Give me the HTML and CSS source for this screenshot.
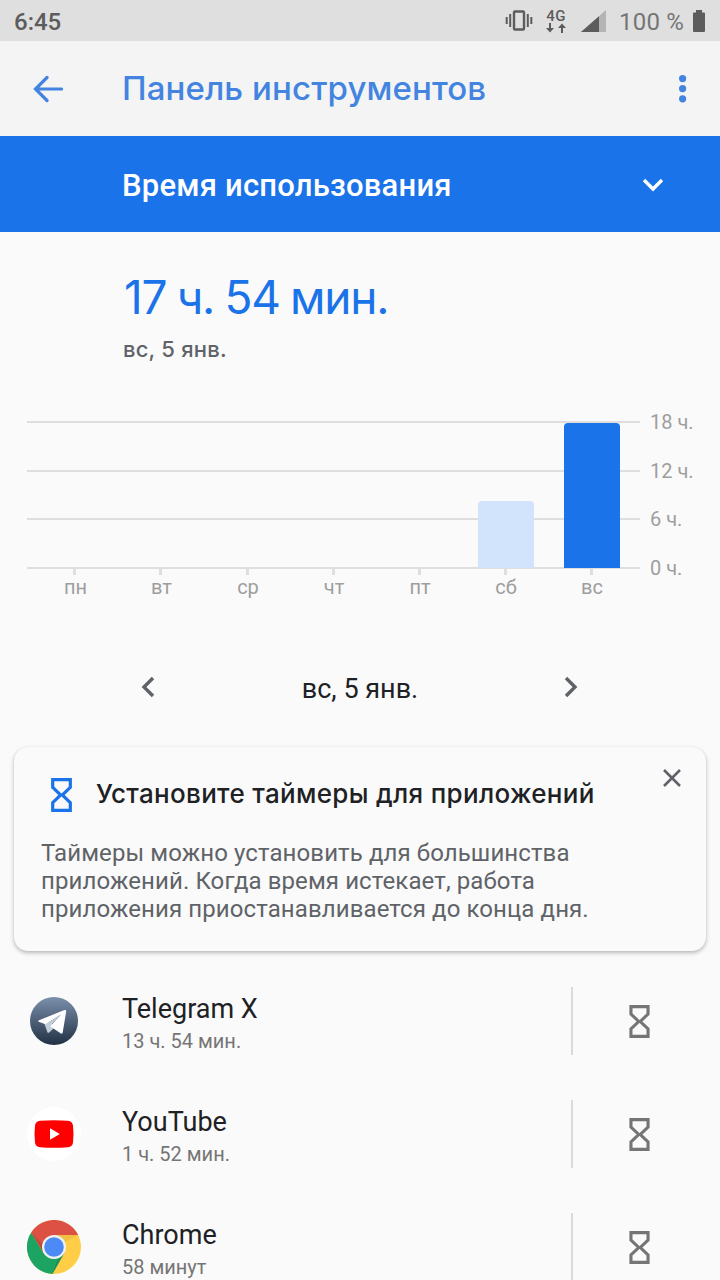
FILE: index.html
```html
<!DOCTYPE html>
<html lang="ru">
<head>
    <meta charset="UTF-8">
    <meta name="viewport" content="width=device-width, initial-scale=1.0">
    <title>Панель инструментов</title>
    <link rel="stylesheet" href="styles.css">
</head>
<body>
    <svg class="symbols" width="0" height="0">
        <symbol id="hourglass" viewBox="0 0 21 34">
            <path d="M1.700 1.700H19.300V9.300L11.300 17L19.300 24.700V32.300H1.700V24.700L9.700 17L1.700 9.300Z" fill="none" stroke="currentColor" stroke-width="3.2"/>
        </symbol>
    </svg>

    <div class="status-bar">
        <span class="clock">6:45</span>
        <div class="status-icons">
            <svg class="vibrate" width="28" height="22" viewBox="0 0 28 22">
                <rect x="9" y="1.5" width="10" height="18" rx="1" fill="none" stroke="#5c5c5c" stroke-width="2.4"/>
                <path d="M5.2 4V17M1.7 7V14M22.8 4V17M26.3 7V14" stroke="#5c5c5c" stroke-width="2"/>
            </svg>
            <div class="network">
                <span>4G</span>
                <svg width="20" height="10" viewBox="0 0 20 10">
                    <path d="M4 0V7M16 10V3" stroke="#5c5c5c" stroke-width="2"/>
                    <path d="M0 5H8L4 9.5ZM12 5H20L16 .5Z" fill="#5c5c5c"/>
                </svg>
            </div>
            <svg class="signal" width="25" height="22" viewBox="0 0 25 22">
                <path d="M25 0V22H0Z" fill="#b4b4b4"/>
                <path d="M18 6.2V22H0Z" fill="#5c5c5c"/>
            </svg>
            <span class="percent">100 %</span>
            <svg class="battery" width="12" height="22" viewBox="0 0 12 22">
                <path d="M3 0H9V2.5H11Q12 2.5 12 3.5V21Q12 22 11 22H1Q0 22 0 21V3.5Q0 2.5 1 2.5H3Z" fill="#5c5c5c"/>
            </svg>
        </div>
    </div>

    <header class="app-bar">
        <svg class="back" width="30" height="28" viewBox="0 0 30 28">
            <path d="M14 2.500L2.500 14L14 25.500M3 14H28.500" fill="none" stroke="#4384e0" stroke-width="3.2" stroke-linecap="round"/>
        </svg>
        <h1>Панель инструментов</h1>
        <svg class="more" width="8" height="28" viewBox="0 0 8 28">
            <g fill="#4384e0">
                <circle cx="3.600" cy="3.600" r="3.6"/>
                <circle cx="3.600" cy="13.600" r="3.6"/>
                <circle cx="3.600" cy="23.800" r="3.6"/>
            </g>
        </svg>
    </header>

    <div class="mode">
        <span>Время использования</span>
        <svg width="22" height="14" viewBox="0 0 22 14">
            <path d="M2 2L11 11L20 2" fill="none" stroke="#fff" stroke-width="3.4"/>
        </svg>
    </div>

    <section class="summary">
        <div class="total">17 ч. 54 мин.</div>
        <div class="date">вс, 5 янв.</div>
    </section>

    <section class="chart">
        <div class="plot">
            <div class="lines">
                <i></i><i></i><i></i><i></i>
            </div>
            <div class="bars">
                <div></div>
                <div></div>
                <div></div>
                <div></div>
                <div></div>
                <div><b class="bar" style="height: 67px"></b></div>
                <div><b class="bar today" style="height: 145px"></b></div>
            </div>
        </div>
        <div class="scale">
            <span>18 ч.</span>
            <span>12 ч.</span>
            <span>6 ч.</span>
            <span>0 ч.</span>
        </div>
        <div class="days">
            <span>пн</span>
            <span>вт</span>
            <span>ср</span>
            <span>чт</span>
            <span>пт</span>
            <span>сб</span>
            <span>вс</span>
        </div>
    </section>

    <nav class="pager">
        <svg width="14" height="22" viewBox="0 0 14 22">
            <path d="M12 2L3 11L12 20" fill="none" stroke="#5f6368" stroke-width="3.4"/>
        </svg>
        <span>вс, 5 янв.</span>
        <svg width="14" height="22" viewBox="0 0 14 22">
            <path d="M2 2L11 11L2 20" fill="none" stroke="#5f6368" stroke-width="3.4"/>
        </svg>
    </nav>

    <section class="card">
        <div class="card-head">
            <svg class="hourglass blue" width="21" height="34"><use href="#hourglass"/></svg>
            <h2>Установите таймеры для приложений</h2>
            <svg class="close" width="20" height="20" viewBox="0 0 20 20">
                <path d="M2 2L18 18M18 2L2 18" stroke="#5f6368" stroke-width="2.6"/>
            </svg>
        </div>
        <p>Таймеры можно установить для большинства<br>приложений. Когда время истекает, работа<br>приложения приостанавливается до конца дня.</p>
    </section>

    <ul class="apps">
        <li>
            <svg class="app-icon" width="54" height="54" viewBox="0 0 54 54">
                <defs>
                    <linearGradient id="tg" x1="0" y1="0" x2="0" y2="1">
                        <stop offset="0" stop-color="#7b90ac"/>
                        <stop offset="1" stop-color="#213144"/>
                    </linearGradient>
                </defs>
                <circle cx="27" cy="27" r="24" fill="url(#tg)"/>
                <path d="M17 28.500L20.500 38.500Q21.500 39.300 22.500 38.300L27 34L24 28Z" fill="#c3cedb"/>
                <path d="M12 26.300Q10.400 27.400 12.400 28L18.500 30.200L34 20.500L23.200 32.300L33.500 39.300Q35.200 40.300 35.700 38.400L39.200 17.500Q39.400 15.500 37.400 16Z" fill="#fff"/>
                <path d="M18.500 30.200L34 20.500L23.200 31.800L21.500 38Z" fill="#c3cedb"/>
            </svg>
            <div class="info">
                <div class="name">Telegram X</div>
                <div class="time">13 ч. 54 мин.</div>
            </div>
            <div class="timer"><svg class="hourglass" width="21" height="33"><use href="#hourglass"/></svg></div>
        </li>
        <li>
            <svg class="app-icon" width="54" height="54" viewBox="0 0 54 54">
                <circle cx="27" cy="27" r="27" fill="#fff"/>
                <path d="M13 13.700Q27 12.700 41 13.700Q45.500 14.200 46 18.500Q47 27 46 35.500Q45.500 39.800 41 40.300Q27 41.300 13 40.300Q8.500 39.800 8 35.500Q7 27 8 18.500Q8.500 14.200 13 13.700Z" fill="#f00"/>
                <path d="M23 21.300V32.700L32.800 27Z" fill="#fff"/>
            </svg>
            <div class="info">
                <div class="name">YouTube</div>
                <div class="time">1 ч. 52 мин.</div>
            </div>
            <div class="timer"><svg class="hourglass" width="21" height="33"><use href="#hourglass"/></svg></div>
        </li>
        <li>
            <svg class="app-icon" width="54" height="54" viewBox="0 0 54 54">
                <circle cx="27" cy="27" r="27" fill="#ffcd46"/>
                <path d="M27 27L16.600 33L4.200 12.500A27 27 0 0 0 25.500 54L37.400 33Z" fill="#1da462"/>
                <path d="M27 15H51.200A27 27 0 0 0 4.200 12.500L16.600 33L27 27Z" fill="#dd5144"/>
                <path d="M4.200 12.500L16.600 33L15.500 24Z" fill="#000" opacity=".12"/>
                <path d="M27 15H51.200L38.500 22Z" fill="#000" opacity=".06"/>
                <path d="M25.500 54L37.400 33L31 38Z" fill="#000" opacity=".12"/>
                <circle cx="27" cy="27" r="12" fill="#f1f1f1"/>
                <circle cx="27" cy="27" r="9.800" fill="#4c8bf5"/>
            </svg>
            <div class="info">
                <div class="name">Chrome</div>
                <div class="time">58 минут</div>
            </div>
            <div class="timer"><svg class="hourglass" width="21" height="33"><use href="#hourglass"/></svg></div>
        </li>
    </ul>
</body>
</html>
```

FILE: styles.css
```css
* {
    box-sizing: border-box;
}

body {
    margin: 0;
    height: 1280px;
    overflow: hidden;
    background-color: #fafafa;
    font-family: Roboto, "Noto Sans", sans-serif;
    color: #202124;
}

svg {
    display: block;
    flex: none;
}

.symbols {
    position: absolute;
}

.status-bar {
    display: flex;
    justify-content: space-between;
    align-items: center;
    height: 41px;
    padding: 1px 15px 0 14px;
    background-color: #dfdfdf;
    color: #5c5c5c;
    font-size: 24px;
}

.clock {
    padding-top: 2px;
    font-weight: 500;
}

.status-icons {
    display: flex;
    align-items: center;
}

.network {
    width: 20px;
    margin: 0 15px 0 13px;
    font-size: 15px;
    font-weight: 500;
    line-height: 13px;
    text-align: center;
    letter-spacing: 0.5px;
}

.signal {
    margin-right: 13px;
}

.vibrate {
    margin-left: -1px;
}

.percent {
    margin: 2px 9px 0 0;
    color: #757575;
    letter-spacing: 0.2px;
}

.app-bar {
    display: flex;
    align-items: center;
    height: 95px;
    padding: 0 33px;
    background-color: #f4f4f4;
}

.app-bar h1 {
    flex: 1;
    margin: -2px 0 0 59px;
    font-family: Inter, "Noto Sans", sans-serif;
    font-size: 33px;
    font-weight: 500;
    letter-spacing: 0.1px;
    color: #4384e0;
}

.mode {
    display: flex;
    justify-content: space-between;
    align-items: center;
    height: 96px;
    padding: 2px 56px 0 122px;
    background-color: #1a73e8;
    color: #fff;
    font-size: 31px;
    font-weight: 500;
    letter-spacing: 0.2px;
}

.summary {
    height: 189px;
    padding: 35px 0 0 124px;
    font-family: Inter, "Noto Sans", sans-serif;
}

.total {
    font-size: 46px;
    line-height: 60px;
    letter-spacing: -1.2px;
    word-spacing: -1.4px;
    color: #1a73e8;
}

.date {
    margin: 7px 0 0 -1px;
    font-size: 22px;
    line-height: 30px;
    font-weight: 500;
    letter-spacing: 0.2px;
    color: #5f6368;
}

.chart {
    display: grid;
    grid-template-columns: 613px 1fr;
    grid-template-rows: 148px auto;
    column-gap: 10px;
    padding-left: 27px;
    color: #9e9e9e;
    font-size: 20px;
}

.plot {
    display: grid;
}

.lines,
.bars {
    grid-area: 1 / 1;
}

.lines {
    display: flex;
    flex-direction: column;
    justify-content: space-between;
}

.lines i {
    height: 2px;
    background-color: #dedede;
}

.bars,
.days {
    display: grid;
    grid-template-columns: repeat(7, 86px);
    padding-left: 5px;
}

.bars div {
    display: flex;
    justify-content: center;
    align-items: flex-end;
    padding: 0 0 1px 2px;
}

.bar {
    width: 56px;
    background-color: #d2e3fc;
    border-radius: 4px 4px 0 0;
}

.bar.today {
    background-color: #1a73e8;
}

.scale {
    display: flex;
    flex-direction: column;
    justify-content: space-between;
    margin: -11px 0;
    line-height: 24px;
}

.days span {
    padding-left: 1px;
    text-align: center;
    line-height: 24px;
}

.days span::before {
    content: "";
    display: block;
    width: 3px;
    height: 6px;
    margin: 0 0 0 40px;
    background-color: #dedede;
}

.days span:nth-child(n+3) {
    padding-left: 2px;
}

.pager {
    display: flex;
    justify-content: space-between;
    align-items: center;
    height: 148px;
    padding: 28px 142px 0 141px;
    font-size: 27px;
}

.pager span {
    padding: 3px 0 0 1px;
}

.card {
    height: 204px;
    margin: 0 14px;
    padding: 30px 24px 0 27px;
    border-radius: 14px;
    box-shadow: 0 2px 4px rgba(0, 0, 0, 0.26), 0 0 1px rgba(0, 0, 0, 0.12);
}

.card-head {
    display: flex;
    height: 62px;
}

.card-head .hourglass {
    margin: 1px 24px 0 10px;
}

.card-head h2 {
    flex: 1;
    margin: 0;
    font-family: Inter, "Noto Sans", sans-serif;
    font-size: 26px;
    font-weight: 500;
    line-height: 34px;
    letter-spacing: 0.32px;
    white-space: nowrap;
}

.close {
    margin-top: -9px;
}

.card p {
    margin: 0;
    font-size: 24px;
    line-height: 28px;
    letter-spacing: 0.1px;
    color: #5f6368;
    white-space: nowrap;
}

.hourglass {
    color: #757575;
}

.hourglass.blue {
    color: #1a73e8;
}

.apps {
    margin: 0;
    padding: 13px 0 0;
    list-style: none;
}

.apps li {
    display: flex;
    align-items: center;
    height: 113px;
    padding-left: 27px;
}

.info {
    flex: 1;
    padding: 6px 0 0 41px;
}

.name {
    font-size: 27px;
    line-height: 34px;
}

.time {
    font-size: 20px;
    line-height: 30px;
    color: #757575;
}

.timer {
    display: flex;
    align-items: center;
    width: 149px;
    height: 68px;
    padding: 1px 0 0 56px;
    border-left: 2px solid #dadada;
}
```
